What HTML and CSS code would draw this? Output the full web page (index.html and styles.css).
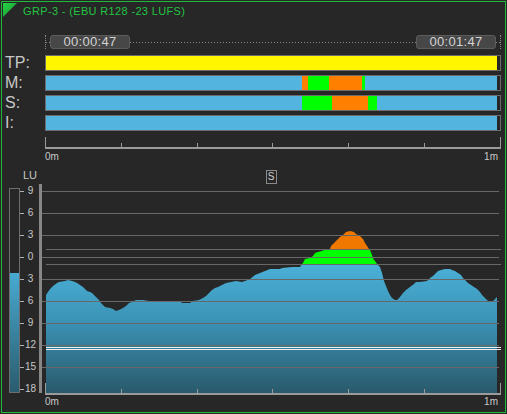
FILE: index.html
```html
<!DOCTYPE html>
<html lang="en">
<head>
  <meta charset="UTF-8">
  <meta name="viewport" content="width=device-width, initial-scale=1.0">
  <title>Loudness - GRP-3</title>
  <link rel="stylesheet" href="styles.css">
</head>
<body>
  <div class="frame">
    <div class="title">
      <svg class="corner" width="14" height="14" viewBox="0 0 14 14">
        <defs>
          <linearGradient id="cornerShade" x1="0" y1="0" x2="1" y2="1">
            <stop offset="0" stop-color="#26d046"/>
            <stop offset="1" stop-color="#179a30"/>
          </linearGradient>
        </defs>
        <polygon points="0,0 14,0 0,14" fill="url(#cornerShade)"/>
      </svg>
      <span class="title-text">GRP-3 - (EBU R128 -23 LUFS)</span>
    </div>

    <div class="times">
      <span class="time">00:00:47</span>
      <span class="time">00:01:47</span>
    </div>

    <div class="meters">
      <div class="meter-row">
        <span class="meter-label">TP:</span>
        <div class="bar">
          <span class="seg yellow" style="width:451px"></span>
        </div>
      </div>
      <div class="meter-row">
        <span class="meter-label">M:</span>
        <div class="bar">
          <span class="seg blue" style="width:256px"></span>
          <span class="seg orange" style="width:6px"></span>
          <span class="seg green" style="width:21px"></span>
          <span class="seg orange" style="width:33px"></span>
          <span class="seg green" style="width:3px"></span>
          <span class="seg blue" style="width:132px"></span>
        </div>
      </div>
      <div class="meter-row">
        <span class="meter-label">S:</span>
        <div class="bar">
          <span class="seg blue" style="width:256px"></span>
          <span class="seg green" style="width:30px"></span>
          <span class="seg orange" style="width:36px"></span>
          <span class="seg green" style="width:9px"></span>
          <span class="seg blue" style="width:120px"></span>
        </div>
      </div>
      <div class="meter-row">
        <span class="meter-label">I:</span>
        <div class="bar">
          <span class="seg blue" style="width:451px"></span>
        </div>
      </div>
    </div>

    <div class="axis">
      <div class="ticks">
        <i class="tick big"></i>
        <i class="tick"></i>
        <i class="tick"></i>
        <i class="tick"></i>
        <i class="tick"></i>
        <i class="tick"></i>
        <i class="tick big"></i>
      </div>
      <div class="time-labels"><span>0m</span><span>1m</span></div>
    </div>

    <div class="lower">
      <div class="level">
        <div class="level-fill" style="height:119px"></div>
      </div>

      <div class="scale">
        <div class="unit">LU</div>
        <div class="step"><i></i><span>9</span></div>
        <div class="step"><i></i><span>6</span></div>
        <div class="step"><i></i><span>3</span></div>
        <div class="step"><i></i><span>0</span></div>
        <div class="step"><i></i><span>3</span></div>
        <div class="step"><i></i><span>6</span></div>
        <div class="step"><i></i><span>9</span></div>
        <div class="step"><i></i><span>12</span></div>
        <div class="step"><i></i><span>15</span></div>
        <div class="step"><i></i><span>18</span></div>
      </div>

      <div class="graph">
        <div class="mode">S</div>
        <svg class="plot" width="464" height="212" viewBox="0 0 464 212">
          <defs>
            <linearGradient id="fade" gradientUnits="userSpaceOnUse" x1="0" y1="60" x2="0" y2="209">
              <stop offset="0" stop-color="#50b9e2"/>
              <stop offset="0.5" stop-color="#3c95b8"/>
              <stop offset="1" stop-color="#29596b"/>
            </linearGradient>
            <clipPath id="curve">
              <polygon points="7,209 7,111 11,105 14,102 18,99 20,98 26,97 29,96 33,97 36,98 38,99 41,101 44,103 46,105 48,107 51,108 53,109 56,112 58,114 60,116 62,119 64,121 66,123 71,124 74,125 77,127 80,126 84,124 87,122 90,119 93,118 97,116 104,116 116,118 142,118 143,119 151,119 154,117 160,116 164,114 167,112 170,109 173,106 176,104 179,103 183,101 187,99 192,98 197,97 203,98 206,97 211,95 216,91 221,89 226,87 231,85 241,85 243,84 253,83 261,83 263,80 264,79 266,75 271,74 274,72 276,69 279,68 283,67 285,66 289,66 291,65 292,62 295,59 298,56 301,53 304,51 306,49 307,48 311,47 315,48 317,50 321,52 324,55 326,59 328,62 330,65 331,66 333,71 334,74 335,76 336,77 338,80 339,81 341,83 342,86 343,89 344,93 345,97 347,102 349,107 351,111 353,114 356,116 358,116 361,113 364,109 367,106 371,103 375,100 377,98 381,98 388,97 391,94 394,92 397,89 399,87 402,86 406,85 411,85 413,86 416,87 419,89 422,91 424,94 426,96 429,99 432,101 435,103 438,105 441,108 443,111 445,113 448,116 451,118 453,118 455,116 457,114 458,113 458,209"/>
            </clipPath>
          </defs>
          <rect x="0" y="0" width="3" height="209" fill="#878787"/>
          <g clip-path="url(#curve)">
            <rect x="7" y="0" width="451" height="65.5" fill="#f07800"/>
            <rect x="7" y="65.5" width="451" height="15" fill="#00ff00"/>
            <rect x="7" y="80.5" width="451" height="129" fill="url(#fade)"/>
          </g>
          <path d="M3 7.5H460M3 29.5H460M3 51.5H460M3 73.5H460M3 95.5H460M3 117.5H460M3 139.5H460M3 161.5H460M3 183.5H460" stroke="#686868"/>
          <path d="M7 65.5H462M7 80.5H462" stroke="#686868"/>
          <path d="M7 163.5H462M7 165.5H462" stroke="#eeeeee"/>
          <rect x="6" y="209" width="456" height="2" fill="#9a9a9a"/>
          <g fill="#9a9a9a">
            <rect x="6" y="199" width="1" height="10"/>
            <rect x="82" y="205" width="1" height="4"/>
            <rect x="158" y="205" width="1" height="4"/>
            <rect x="233" y="205" width="1" height="4"/>
            <rect x="309" y="205" width="1" height="4"/>
            <rect x="385" y="205" width="1" height="4"/>
            <rect x="461" y="199" width="1" height="10"/>
          </g>
        </svg>
        <div class="time-labels"><span>0m</span><span>1m</span></div>
      </div>
    </div>
  </div>
</body>
</html>
```

FILE: styles.css
```css
body {
  margin: 0;
  background-color: #272727;
  font-family: 'Liberation Sans', Arial, sans-serif;
  color: #c8c8c8;
}
.frame {
  margin: 1px 0 0 1px;
  width: 505px;
  height: 412px;
  box-sizing: border-box;
  border: 1px solid #1fb83b;
  background-color: #272727;
  overflow: hidden;
}
.title {
  display: flex;
  align-items: flex-start;
  height: 18px;
}
.corner {
  display: block;
  margin: 1px 0 0 1px;
}
.title-text {
  margin-left: 6px;
  padding-top: 2px;
  font-size: 11px;
  line-height: 14px;
  letter-spacing: 0.35px;
  color: #22c441;
}
.times {
  display: flex;
  justify-content: space-between;
  margin: 15px 0 0 43px;
  width: 456px;
  height: 14px;
  padding: 0 4px;
  box-sizing: border-box;
  border-left: 1px dotted #8a8a8a;
  border-right: 1px dotted #8a8a8a;
  background: linear-gradient(to right, #8a8a8a 1px, transparent 1px) 0 7px / 3px 1px repeat-x;
}
.time {
  width: 80px;
  height: 14px;
  box-sizing: border-box;
  border: 1px solid #5c5c5c;
  border-radius: 3px;
  background-color: #474747;
  font-size: 13px;
  line-height: 12px;
  letter-spacing: 0.3px;
  text-align: center;
  color: #d4d4d4;
}
.meters {
  display: flex;
  flex-direction: column;
  gap: 4px;
  margin-top: 6px;
}
.meter-row {
  display: flex;
  height: 16px;
}
.meter-label {
  width: 43px;
  padding-left: 3px;
  box-sizing: border-box;
  font-size: 16px;
  line-height: 16px;
}
.bar {
  display: flex;
  width: 456px;
  height: 16px;
  box-sizing: border-box;
  border: 1px solid #6b6b6b;
  background-color: #262626;
}
.seg {
  height: 100%;
}
.seg.blue { background-color: #53b5df; }
.seg.yellow { background-color: #fff600; }
.seg.green { background-color: #00ff00; }
.seg.orange { background-color: #ff8000; }
.axis {
  margin-top: 6px;
}
.ticks {
  display: flex;
  justify-content: space-between;
  align-items: flex-end;
  margin-left: 43px;
  width: 456px;
  height: 12px;
  box-sizing: border-box;
  border-bottom: 2px solid #9a9a9a;
}
.tick {
  width: 1px;
  height: 4px;
  background-color: #9a9a9a;
}
.tick.big {
  height: 10px;
}
.time-labels {
  display: flex;
  justify-content: space-between;
  width: 456px;
  padding-right: 3px;
  box-sizing: border-box;
  font-size: 10px;
  line-height: 12px;
}
.axis .time-labels {
  margin: 2px 0 0 43px;
}
.lower {
  display: flex;
  align-items: flex-start;
  margin-top: 3px;
}
.level {
  display: flex;
  flex-direction: column;
  justify-content: flex-end;
  margin: 22px 0 0 7px;
  width: 11px;
  height: 205px;
  box-sizing: border-box;
  border: 1px solid #6e6e6e;
}
.level-fill {
  background: linear-gradient(#48aad2, #2a5c6e);
}
.scale {
  width: 19px;
}
.unit {
  height: 14px;
  padding: 2px 0 0 3px;
  box-sizing: border-box;
  font-size: 11px;
  line-height: 14px;
}
.step {
  display: flex;
  height: 22px;
}
.step i {
  width: 4px;
  height: 1px;
  margin-top: 11px;
  background-color: #b0b0b0;
}
.step span {
  width: 11px;
  margin-left: 1px;
  text-align: center;
  font-size: 10px;
  line-height: 22px;
}
.graph {
  display: flex;
  flex-direction: column;
  width: 464px;
}
.mode {
  margin: 4px auto 0;
  width: 11px;
  height: 14px;
  box-sizing: border-box;
  border: 1px solid #8a8a8a;
  font-size: 10px;
  line-height: 12px;
  text-align: center;
  color: #cfcfcf;
}
.plot {
  display: block;
}
.graph .time-labels {
  margin-left: 6px;
}
```
